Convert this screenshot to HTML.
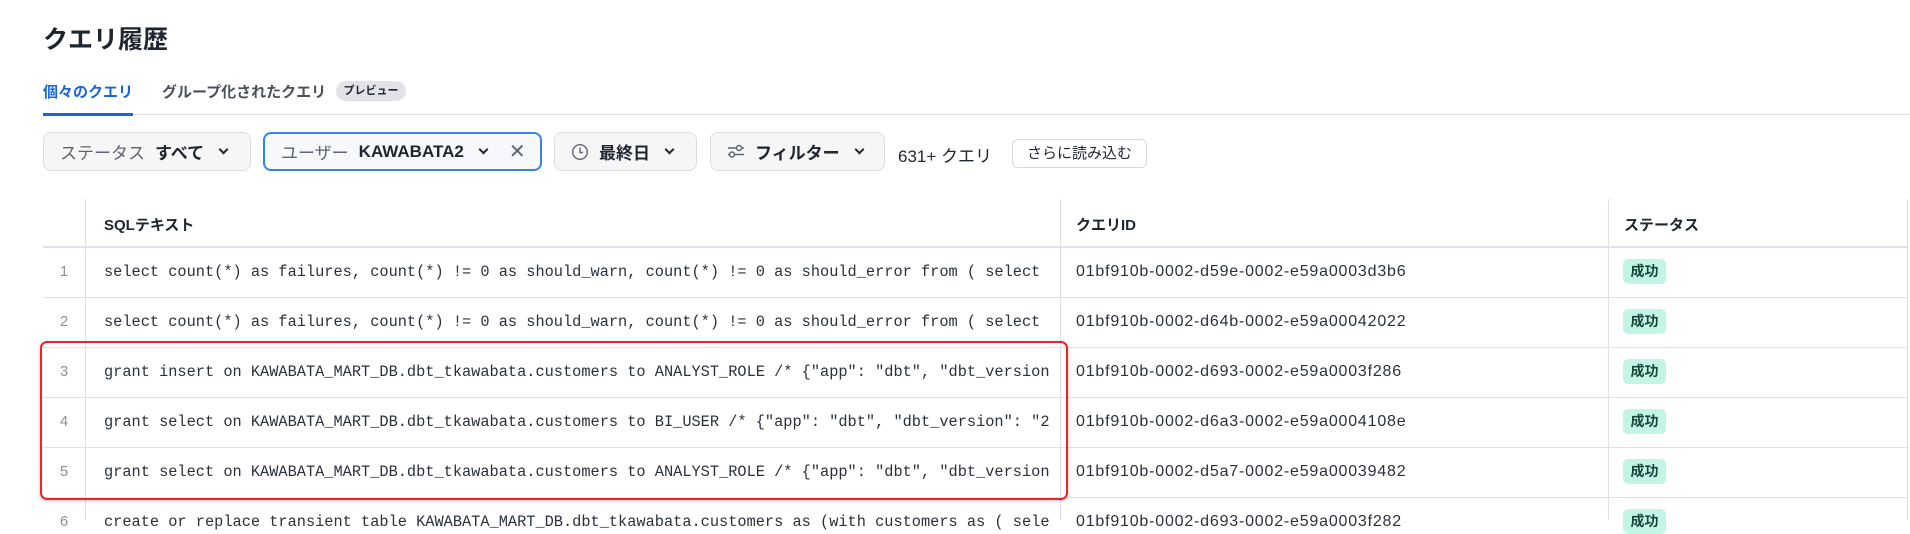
<!DOCTYPE html>
<html><head><meta charset="utf-8"><style>
*{box-sizing:border-box;margin:0;padding:0}
body{width:1910px;height:520px;overflow:hidden;background:#fff;font-family:"Liberation Sans","Noto Sans CJK JP",sans-serif;color:#1e252f;position:relative}
.a{position:absolute}
.title{left:43px;top:20px;font-size:25px;font-weight:bold}
.tab{top:81px;font-size:15px;font-weight:bold}
.btn{position:absolute;top:132px;height:39px;border:1px solid #dcdde3;border-radius:8px;background:#f6f6f7;display:flex;align-items:center;padding-left:16px;font-size:17px;white-space:nowrap}
.btn .l{color:#5d6470;margin-right:10px}
.btn b{margin-right:16px}
.chev{width:7px;height:7px;border-right:2.4px solid #1e252f;border-bottom:2.4px solid #1e252f;transform:rotate(45deg);margin-top:-4px}
.vl{position:absolute;top:199px;height:321px;width:1px;background:#dfe1ea}
.hl{position:absolute;left:43px;width:1865px;height:1px;background:#dfe1ea}
.th{position:absolute;top:214px;font-size:15px;font-weight:bold}
.num{position:absolute;left:43px;width:42px;text-align:center;color:#8a909c;font-size:15px}
.sql{position:absolute;left:104px;width:950px;overflow:hidden;white-space:nowrap;font-family:"Liberation Mono",monospace;font-size:15.3px;color:#2a313b}
.qid{position:absolute;left:1076px;font-size:16px;letter-spacing:0.8px;color:#2a313b}
.bd{position:absolute;left:1623px;width:43px;height:25px;border-radius:5px;background:#c3f5e6;color:#14493a;font-size:14px;font-weight:bold;text-align:center;line-height:25px}
</style></head><body>
<div class="a title">クエリ履歴</div>
<div class="a tab" style="left:43px;color:#1a66d9">個々のクエリ</div>
<div class="a tab" style="left:162px;color:#4a515c">グループ化されたクエリ</div>
<div class="a" style="left:336px;top:81px;width:70px;height:20px;border-radius:10px;background:#e1e3e8;font-size:11px;font-weight:bold;text-align:center;line-height:20px">プレビュー</div>
<div class="a" style="left:43px;top:114px;width:1867px;height:1px;background:#dcdde6"></div>
<div class="a" style="left:43px;top:113px;width:90px;height:3px;background:#1a66d9"></div>

<div class="btn" style="left:43px;width:208px"><span class="l">ステータス</span><b>すべて</b><span class="chev"></span></div>
<div class="btn" style="left:263px;width:279px;border:2px solid #3b82e6;background:#f7f8fa"><span class="l">ユーザー</span><b>KAWABATA2</b><span class="chev"></span><span style="margin-left:22px;color:#5d6470;font-size:20px">✕</span></div>
<div class="btn" style="left:554px;width:143px"><svg width="18" height="18" viewBox="0 0 18 18" style="margin-right:10px"><circle cx="9" cy="9" r="7.3" fill="none" stroke="#5d6470" stroke-width="1.4"/><path d="M9 4.5V9.5H12" fill="none" stroke="#5d6470" stroke-width="1.4"/></svg><b>最終日</b><span class="chev"></span></div>
<div class="btn" style="left:710px;width:175px"><svg width="18" height="18" viewBox="0 0 18 18" style="margin-right:10px"><circle cx="5" cy="11.5" r="2.5" fill="none" stroke="#5d6470" stroke-width="1.4"/><circle cx="12" cy="5" r="2.5" fill="none" stroke="#5d6470" stroke-width="1.4"/><path d="M1 5H9.5M14.5 5H17M1 11.5H2.5M7.5 11.5H17" stroke="#5d6470" stroke-width="1.4"/></svg><b>フィルター</b><span class="chev"></span></div>
<div class="a" style="left:898px;top:142px;font-size:17px">631+ クエリ</div>
<div class="a" style="left:1012px;top:139px;width:135px;height:29px;border:1px solid #d6d8de;border-radius:6px;font-size:15px;text-align:center;line-height:27px">さらに読み込む</div>

<div class="vl" style="left:85px"></div>
<div class="vl" style="left:1060px"></div>
<div class="vl" style="left:1608px"></div>
<div class="vl" style="left:1907px"></div>
<div class="hl" style="top:246px;height:2px"></div>
<div class="hl" style="top:297px"></div>
<div class="hl" style="top:347px"></div>
<div class="hl" style="top:397px"></div>
<div class="hl" style="top:447px"></div>
<div class="hl" style="top:497px"></div>

<div class="th" style="left:104px">SQLテキスト</div>
<div class="th" style="left:1076px">クエリID</div>
<div class="th" style="left:1624px">ステータス</div>

<div class="num" style="top:263px">1</div><div class="sql" style="top:263px">select count(*) as failures, count(*) != 0 as should_warn, count(*) != 0 as should_error from ( select</div><div class="qid" style="top:263px">01bf910b-0002-d59e-0002-e59a0003d3b6</div><div class="bd" style="top:259px">成功</div>
<div class="num" style="top:313px">2</div><div class="sql" style="top:313px">select count(*) as failures, count(*) != 0 as should_warn, count(*) != 0 as should_error from ( select</div><div class="qid" style="top:313px">01bf910b-0002-d64b-0002-e59a00042022</div><div class="bd" style="top:309px">成功</div>
<div class="num" style="top:363px">3</div><div class="sql" style="top:363px">grant insert on KAWABATA_MART_DB.dbt_tkawabata.customers to ANALYST_ROLE /* {"app": "dbt", "dbt_version</div><div class="qid" style="top:363px">01bf910b-0002-d693-0002-e59a0003f286</div><div class="bd" style="top:359px">成功</div>
<div class="num" style="top:413px">4</div><div class="sql" style="top:413px">grant select on KAWABATA_MART_DB.dbt_tkawabata.customers to BI_USER /* {"app": "dbt", "dbt_version": "2</div><div class="qid" style="top:413px">01bf910b-0002-d6a3-0002-e59a0004108e</div><div class="bd" style="top:409px">成功</div>
<div class="num" style="top:463px">5</div><div class="sql" style="top:463px">grant select on KAWABATA_MART_DB.dbt_tkawabata.customers to ANALYST_ROLE /* {"app": "dbt", "dbt_version</div><div class="qid" style="top:463px">01bf910b-0002-d5a7-0002-e59a00039482</div><div class="bd" style="top:459px">成功</div>
<div class="num" style="top:513px">6</div><div class="sql" style="top:513px">create or replace transient table KAWABATA_MART_DB.dbt_tkawabata.customers as (with customers as ( sele</div><div class="qid" style="top:513px">01bf910b-0002-d693-0002-e59a0003f282</div><div class="bd" style="top:509px">成功</div>

<div class="a" style="left:40px;top:341px;width:1028px;height:159px;border:2px solid #e8262a;border-radius:7px;box-shadow:0 1px 3px rgba(0,0,0,.25)"></div>
</body></html>
